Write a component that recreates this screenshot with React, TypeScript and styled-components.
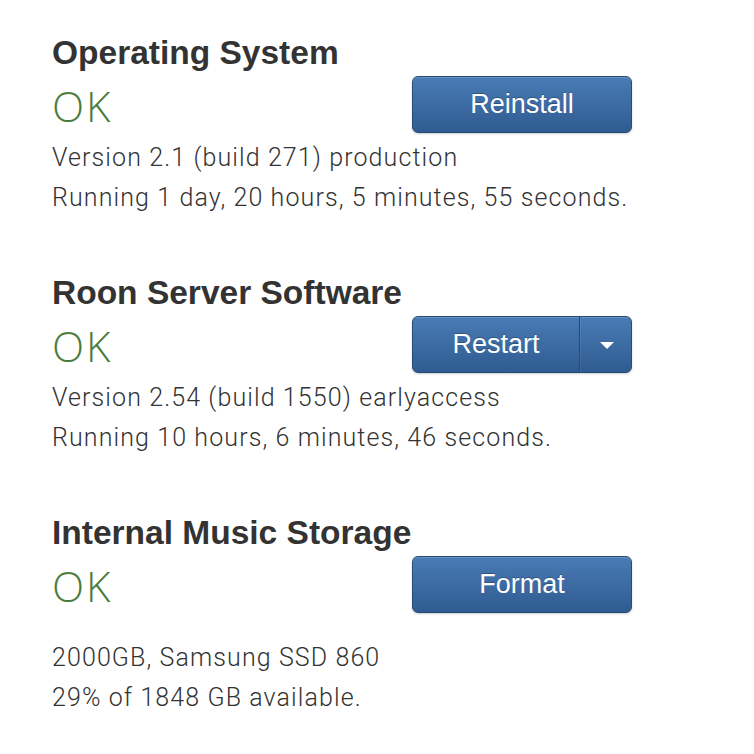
import React from 'react';
import styled, { createGlobalStyle } from 'styled-components';

const GlobalStyle = createGlobalStyle`
  html, body {
    margin: 0;
    padding: 0;
    background: #ffffff;
  }
  body {
    font-family: "Liberation Sans", Arial, sans-serif;
    color: #333333;
  }
`;

const Page = styled.div`
  padding: 34px 0 0 52px;
  display: flex;
  flex-direction: column;
  gap: 56px;
`;

const Section = styled.section`
  display: flex;
  flex-direction: column;
`;

const Heading = styled.h2`
  margin: 0;
  font-family: "Liberation Sans", Arial, sans-serif;
  font-weight: 700;
  font-size: 33.5px;
  line-height: 38px;
  color: #333333;
`;

const StatusRow = styled.div<{ $extra?: number }>`
  display: grid;
  grid-template-columns: 360px 220px;
  align-items: center;
  height: 57px;
  margin-top: 4px;
  margin-bottom: ${(p) => 5 + (p.$extra ?? 0)}px;
`;

const Status = styled.div`
  font-family: "Open Sans", "Liberation Sans", sans-serif;
  font-weight: 300;
  font-size: 42px;
  line-height: 42px;
  letter-spacing: 2px;
  color: #4b7c3e;
  padding-top: 3px;
`;

const Button = styled.button`
  height: 57px;
  width: 220px;
  box-sizing: border-box;
  border: 1px solid #284c78;
  border-radius: 6px;
  background: linear-gradient(#4a7bb5, #2f5b90);
  box-shadow: inset 0 1px 0 rgba(255, 255, 255, 0.18), 0 1px 2px rgba(0, 0, 0, 0.2);
  color: #ffffff;
  font-family: "Liberation Sans", Arial, sans-serif;
  font-size: 27px;
  text-shadow: 0 -1px 0 rgba(0, 0, 0, 0.25);
  padding: 0;
  cursor: pointer;
`;

const SplitGroup = styled.div`
  display: flex;
  height: 57px;
  width: 220px;
  box-sizing: border-box;
  border: 1px solid #284c78;
  border-radius: 6px;
  overflow: hidden;
  background: linear-gradient(#4a7bb5, #2f5b90);
  box-shadow: 0 1px 2px rgba(0, 0, 0, 0.2);
`;

const SplitMain = styled.button`
  flex: 1;
  border: none;
  border-right: 1px solid #274a74;
  background: transparent;
  color: #ffffff;
  font-family: "Liberation Sans", Arial, sans-serif;
  font-size: 27px;
  text-shadow: 0 -1px 0 rgba(0, 0, 0, 0.25);
  box-shadow: inset 0 1px 0 rgba(255, 255, 255, 0.18);
  padding: 0;
`;

const SplitToggle = styled.button`
  width: 51px;
  border: none;
  border-left: 1px solid rgba(255, 255, 255, 0.08);
  background: transparent;
  box-shadow: inset 0 1px 0 rgba(255, 255, 255, 0.18);
  display: flex;
  align-items: center;
  justify-content: center;
  padding: 0 0 0 2px;
`;

const Caret = styled.span`
  width: 0;
  height: 0;
  border-left: 7px solid transparent;
  border-right: 7px solid transparent;
  border-top: 7px solid #ffffff;
  margin-top: 2px;
`;

const Detail = styled.p`
  margin: 0;
  font-family: Roboto, "Liberation Sans", sans-serif;
  font-weight: 300;
  font-size: 25px;
  letter-spacing: 1.1px;
  line-height: 40px;
  color: #333333;
`;

type Item = {
  title: string;
  action: string;
  split?: boolean;
  extra?: number;
  lines: string[];
};

const items: Item[] = [
  {
    title: 'Operating System',
    action: 'Reinstall',
    lines: ['Version 2.1 (build 271) production', 'Running 1 day, 20 hours, 5 minutes, 55 seconds.'],
  },
  {
    title: 'Roon Server Software',
    action: 'Restart',
    split: true,
    lines: ['Version 2.54 (build 1550) earlyaccess', 'Running 10 hours, 6 minutes, 46 seconds.'],
  },
  {
    title: 'Internal Music Storage',
    action: 'Format',
    extra: 20,
    lines: ['2000GB, Samsung SSD 860', '29% of 1848 GB available.'],
  },
];

export default function App() {
  return (
    <>
      <GlobalStyle />
      <Page>
        {items.map((item) => (
          <Section key={item.title}>
            <Heading>{item.title}</Heading>
            <StatusRow $extra={item.extra}>
              <Status>OK</Status>
              {item.split ? (
                <SplitGroup>
                  <SplitMain>{item.action}</SplitMain>
                  <SplitToggle>
                    <Caret />
                  </SplitToggle>
                </SplitGroup>
              ) : (
                <Button>{item.action}</Button>
              )}
            </StatusRow>
            {item.lines.map((line) => (
              <Detail key={line}>{line}</Detail>
            ))}
          </Section>
        ))}
      </Page>
    </>
  );
}
